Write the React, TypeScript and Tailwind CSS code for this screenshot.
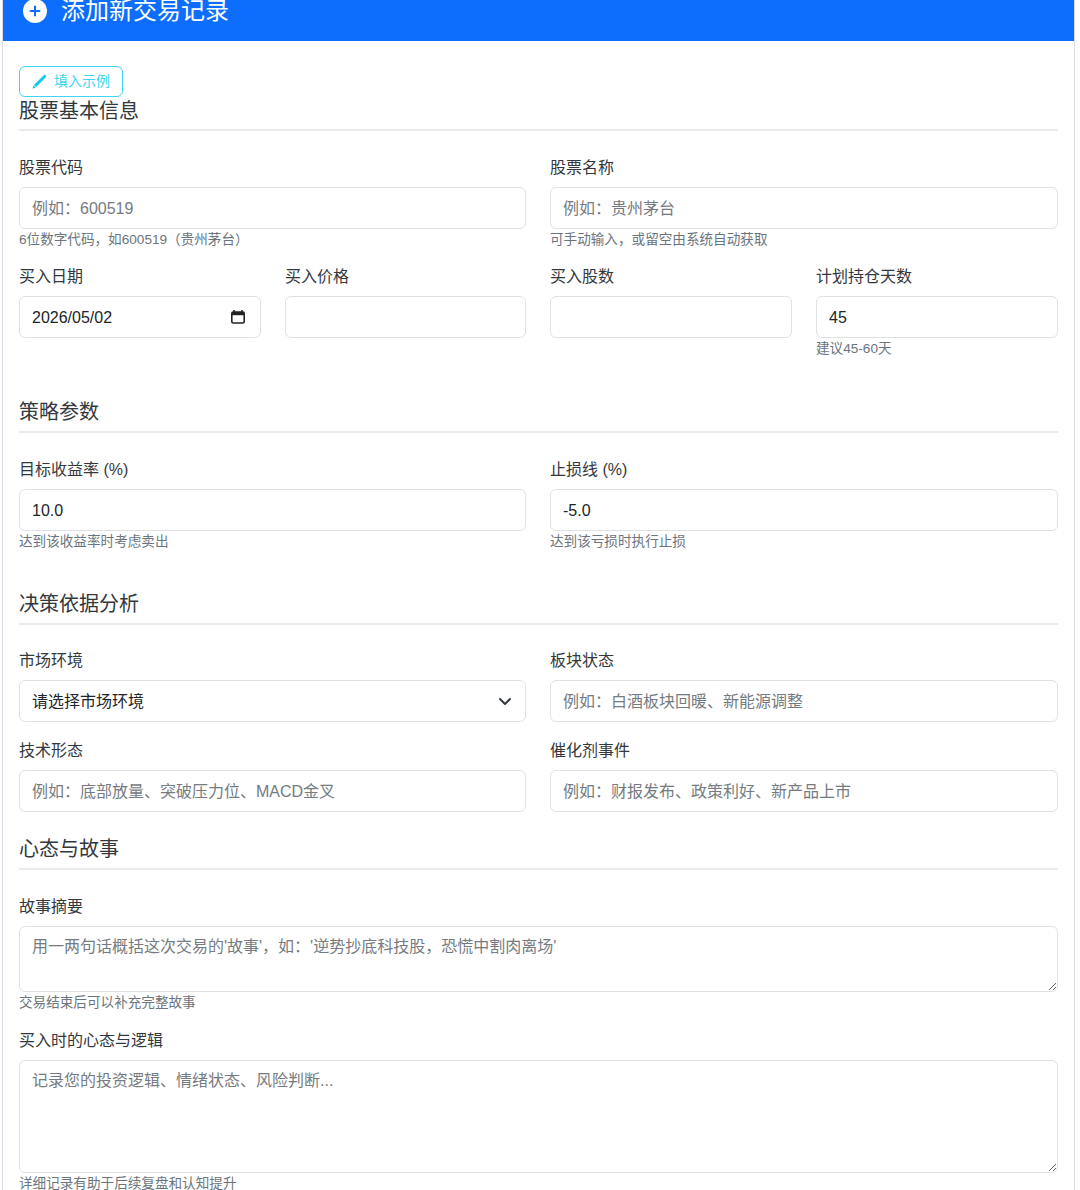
import React from 'react'

const font = "font-['Liberation_Sans','Noto_Sans_CJK_SC',sans-serif]"
const inputClass =
  'block w-full h-[42px] rounded-[6px] border border-[#dee2e6] bg-white px-3 pt-[2px] text-[16px] text-[#212529] placeholder:text-[#757b81] outline-none'
const areaClass =
  'block w-full rounded-[6px] border border-[#dee2e6] bg-white px-3 py-2 text-[16px] leading-[24px] text-[#212529] placeholder:text-[#757b81] outline-none resize-y'
const boxClass =
  'flex h-[42px] items-center justify-between rounded-[6px] border border-[#dee2e6] pl-3 pt-[2px] text-[16px] text-[#212529]'
const twoCols = 'grid grid-cols-[507px_508px] gap-x-6'

const Label = ({ children }: { children: React.ReactNode }) => (
  <label className="block h-[24px] mb-2 text-[16px] leading-[26px] text-[#33383d]">{children}</label>
)

const Help = ({ children }: { children: React.ReactNode }) => (
  <div className="mt-[2px] h-[17px] text-[13.6px] leading-[17px] text-[#6c757d] whitespace-nowrap">{children}</div>
)

const Section = ({ title, className }: { title: string; className: string }) => (
  <h5 className={`h-[34px] border-b-2 border-[#e9ecef] text-[20px] leading-[24px] text-[#33383d] ${className}`}>{title}</h5>
)

export default function App() {
  return (
    <div className={`h-[1190px] w-[1080px] overflow-hidden bg-white ${font}`}>
      <div className="ml-[2px] w-[1073px] border-x border-[#dcdce6] min-h-[1190px]">
        <div className="h-[41px] bg-[#0d6efd] pl-[20px] text-white">
          <div className="flex h-[22px] items-center">
            <svg width="24" height="24" viewBox="0 0 24 24" className="shrink-0">
              <circle cx="12" cy="12" r="12" fill="#fff" />
              <path d="M12 7.5v9M7.5 12h9" stroke="#0d6efd" strokeWidth="2" strokeLinecap="round" />
            </svg>
            <h4 className="ml-[14px] whitespace-nowrap text-[24px] leading-[32px]">添加新交易记录</h4>
          </div>
        </div>

        <div className="px-4 pt-[25px]">
          <button className="flex h-[31px] w-[104px] items-center justify-center gap-[7px] rounded-[6px] border border-[#3dd5f3] text-[14px] text-[#3dd5f3]">
            <svg width="15" height="15" viewBox="0 0 16 16" fill="none">
              <path d="M3.2 12.8 12 4" stroke="#0dcaf0" strokeWidth="3.2" />
              <path d="M12.6 3.4 13.6 2.4" stroke="#0dcaf0" strokeWidth="3.2" strokeLinecap="round" />
              <path d="M0.6 15.4 1.4 12l2.6 2.6z" fill="#0dcaf0" />
            </svg>
            填入示例
          </button>
          <Section title="股票基本信息" className="pt-[2px]" />

          <div className={`mt-6 ${twoCols}`}>
            <div>
              <Label>股票代码</Label>
              <input className={inputClass} placeholder="例如：600519" />
              <Help>6位数字代码，如600519（贵州茅台）</Help>
            </div>
            <div>
              <Label>股票名称</Label>
              <input className={inputClass} placeholder="例如：贵州茅台" />
              <Help>可手动输入，或留空由系统自动获取</Help>
            </div>
          </div>

          <div className="mt-4 grid grid-cols-[242px_241px_242px_242px] gap-x-6">
            <div>
              <Label>买入日期</Label>
              <div className={`${boxClass} pr-[14px]`}>
                <span>2026/05/02</span>
                <svg width="16" height="16" viewBox="0 0 16 16" fill="none" className="-mt-[2px]">
                  <path d="M4 1v2M12 1v2" stroke="#222" strokeWidth="1.6" />
                  <rect x="1.8" y="3" width="12.4" height="11" rx="1.4" stroke="#222" strokeWidth="1.6" />
                  <rect x="2" y="3" width="12" height="3.2" fill="#222" />
                </svg>
              </div>
            </div>
            <div>
              <Label>买入价格</Label>
              <input className={inputClass} />
            </div>
            <div>
              <Label>买入股数</Label>
              <input className={inputClass} />
            </div>
            <div>
              <Label>计划持仓天数</Label>
              <input className={inputClass} defaultValue="45" />
              <Help>建议45-60天</Help>
            </div>
          </div>

          <Section title="策略参数" className="mt-[42px] pt-px" />
          <div className={`mt-6 ${twoCols}`}>
            <div>
              <Label>目标收益率 (%)</Label>
              <input className={inputClass} defaultValue="10.0" />
              <Help>达到该收益率时考虑卖出</Help>
            </div>
            <div>
              <Label>止损线 (%)</Label>
              <input className={inputClass} defaultValue="-5.0" />
              <Help>达到该亏损时执行止损</Help>
            </div>
          </div>

          <Section title="决策依据分析" className="mt-[41px] pt-px" />
          <div className={`mt-[23px] gap-y-4 ${twoCols}`}>
            <div>
              <Label>市场环境</Label>
              <div className={`${boxClass} pr-3`}>
                <span>请选择市场环境</span>
                <svg width="16" height="16" viewBox="0 0 16 16" fill="none" className="-mt-[2px]">
                  <path d="M3 6l5 5 5-5" stroke="#343a40" strokeWidth="2" strokeLinecap="round" strokeLinejoin="round" />
                </svg>
              </div>
            </div>
            <div>
              <Label>板块状态</Label>
              <input className={inputClass} placeholder="例如：白酒板块回暖、新能源调整" />
            </div>
            <div>
              <Label>技术形态</Label>
              <input className={inputClass} placeholder="例如：底部放量、突破压力位、MACD金叉" />
            </div>
            <div>
              <Label>催化剂事件</Label>
              <input className={inputClass} placeholder="例如：财报发布、政策利好、新产品上市" />
            </div>
          </div>

          <Section title="心态与故事" className="mt-[24px] pt-px" />
          <div className="mt-6">
            <Label>故事摘要</Label>
            <textarea
              className={`${areaClass} h-[66px]`}
              placeholder="用一两句话概括这次交易的'故事'，如：'逆势抄底科技股，恐慌中割肉离场'"
            />
            <Help>交易结束后可以补充完整故事</Help>
          </div>
          <div className="mt-[17px]">
            <Label>买入时的心态与逻辑</Label>
            <textarea className={`${areaClass} h-[113px]`} placeholder="记录您的投资逻辑、情绪状态、风险判断..." />
            <Help>详细记录有助于后续复盘和认知提升</Help>
          </div>
        </div>
      </div>
    </div>
  )
}
